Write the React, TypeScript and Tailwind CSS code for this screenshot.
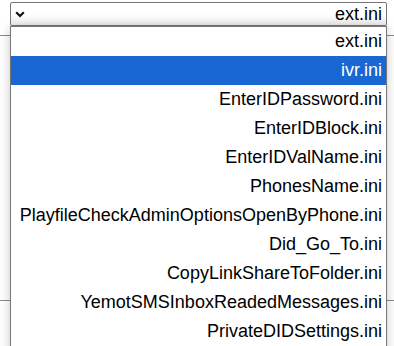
import React from "react";

const files = [
  "ext.ini",
  "ivr.ini",
  "EnterIDPassword.ini",
  "EnterIDBlock.ini",
  "EnterIDValName.ini",
  "PhonesName.ini",
  "PlayfileCheckAdminOptionsOpenByPhone.ini",
  "Did_Go_To.ini",
  "CopyLinkShareToFolder.ini",
  "YemotSMSInboxReadedMessages.ini",
  "PrivateDIDSettings.ini",
];

export default function App() {
  const selected = 1;

  return (
    <div className="relative w-[394px] h-[346px] overflow-hidden bg-white font-['Liberation_Sans',Arial,sans-serif] text-black">
      {/* select box */}
      <div className="pl-[10px] pt-[2px] w-[387px]">
        <div className="h-[24px] flex items-center justify-between pl-[4px] pr-[4px] border border-[#767676] rounded-[2px] bg-gradient-to-b from-white via-white to-[#ececec] text-[18px]">
          <svg width="10" height="7" viewBox="0 0 10 7">
            <path d="M1.2 1.3 L5 5 L8.8 1.3" fill="none" stroke="#111" strokeWidth="2.2" />
          </svg>
          <span className="leading-none">ext.ini</span>
        </div>
      </div>

      {/* page content behind the open list */}
      <div className="mt-[9px] h-[266px] border-t border-b border-[#8a8a8a]" />

      {/* open dropdown list */}
      <div className="absolute left-[10px] top-[26px] w-[377px] h-[340px] bg-white border border-[#767676] shadow-[0_2px_10px_rgba(0,0,0,0.22)]">
        {files.map((f, i) => (
          <div
            key={f}
            className={
              i === selected
                ? "h-[29px] flex items-center justify-end pr-[4px] text-[18px] bg-[#1967d2] text-white"
                : "h-[29px] flex items-center justify-end pr-[4px] text-[18px]"
            }
          >
            {f}
          </div>
        ))}
      </div>
    </div>
  );
}
